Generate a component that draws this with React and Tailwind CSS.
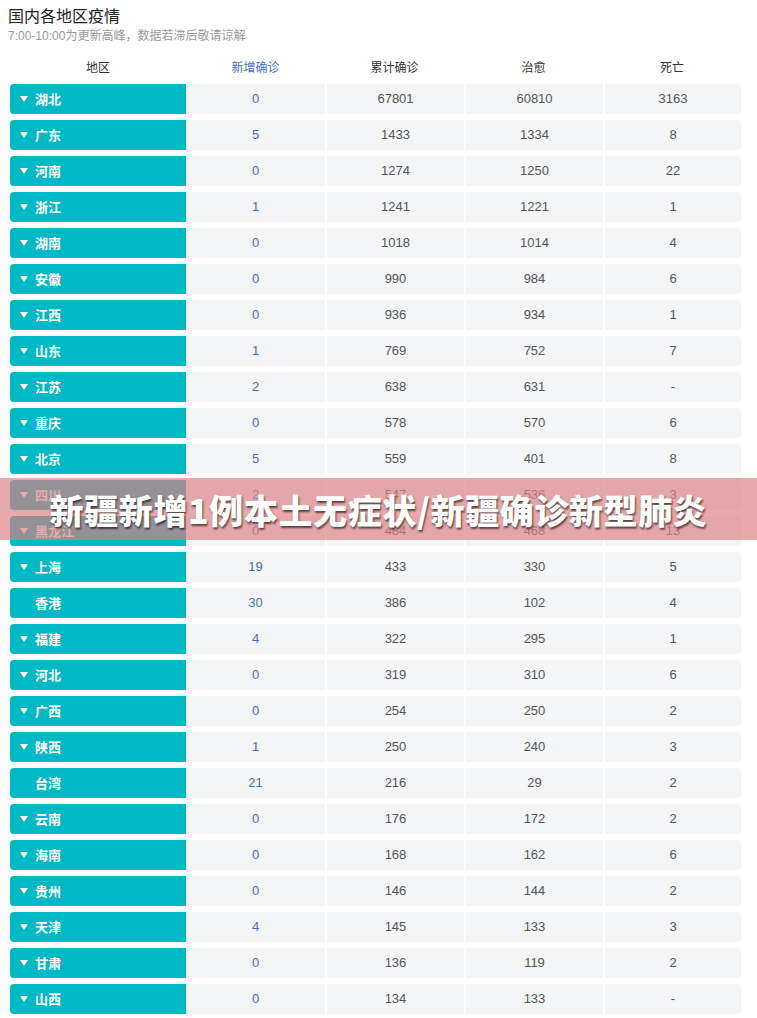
import React from 'react';

const rows = [
  ['湖北', '0', '67801', '60810', '3163', true],
  ['广东', '5', '1433', '1334', '8', true],
  ['河南', '0', '1274', '1250', '22', true],
  ['浙江', '1', '1241', '1221', '1', true],
  ['湖南', '0', '1018', '1014', '4', true],
  ['安徽', '0', '990', '984', '6', true],
  ['江西', '0', '936', '934', '1', true],
  ['山东', '1', '769', '752', '7', true],
  ['江苏', '2', '638', '631', '-', true],
  ['重庆', '0', '578', '570', '6', true],
  ['北京', '5', '559', '401', '8', true],
  ['四川', '2', '547', '536', '3', true],
  ['黑龙江', '0', '484', '468', '13', true],
  ['上海', '19', '433', '330', '5', true],
  ['香港', '30', '386', '102', '4', false],
  ['福建', '4', '322', '295', '1', true],
  ['河北', '0', '319', '310', '6', true],
  ['广西', '0', '254', '250', '2', true],
  ['陕西', '1', '250', '240', '3', true],
  ['台湾', '21', '216', '29', '2', false],
  ['云南', '0', '176', '172', '2', true],
  ['海南', '0', '168', '162', '6', true],
  ['贵州', '0', '146', '144', '2', true],
  ['天津', '4', '145', '133', '3', true],
  ['甘肃', '0', '136', '119', '2', true],
  ['山西', '0', '134', '133', '-', true],
];

const font = "font-['Liberation_Sans','Noto_Sans_CJK_SC',sans-serif]";

const Row = ({ name, add, total, cured, dead, arrow }) => (
  <div className="flex h-[30px] ml-[10px] mb-[6px] text-[13px] leading-[30px]">
    <div className="w-[176px] flex items-center rounded-l-[4px] bg-[#00b9c5] text-white font-bold">
      <span className="w-[25px] flex justify-center pl-[2px]">
        {arrow && (
          <svg width="8" height="6" viewBox="0 0 8 6">
            <path d="M0 0 H8 L4 6 Z" fill="#fff" />
          </svg>
        )}
      </span>
      <span className="font-['Noto_Sans_CJK_SC',sans-serif]">{name}</span>
    </div>
    <div className="w-[139px] bg-[#f4f5f7] text-center text-[#4a6db5]">{add}</div>
    <div className="w-[137px] ml-[2px] bg-[#f4f5f7] text-center text-[#555]">{total}</div>
    <div className="w-[137px] ml-[2px] bg-[#f4f5f7] text-center text-[#555]">{cured}</div>
    <div className="w-[136px] ml-[2px] bg-[#f4f5f7] text-center text-[#555] rounded-r-[4px]">{dead}</div>
  </div>
);

export default function App() {
  return (
    <div className={`relative w-[757px] h-[1018px] overflow-hidden bg-white ${font}`}>
      {/* title */}
      <div className="pl-[8px] pt-[7px]">
        <div className="text-[16px] leading-[20px] text-[#222]">国内各地区疫情</div>
        <div className="text-[12px] leading-[16px] text-[#999] mt-[1px]">7:00-10:00为更新高峰，数据若滞后敬请谅解</div>
      </div>

      {/* header */}
      <div className="flex ml-[10px] h-[40px] items-end pb-[8px] text-[12px] leading-[16px] text-[#333]">
        <div className="w-[176px] text-center">地区</div>
        <div className="w-[139px] text-center text-[#3e6fc9]">新增确诊</div>
        <div className="w-[139px] text-center">累计确诊</div>
        <div className="w-[139px] text-center">治愈</div>
        <div className="w-[138px] text-center">死亡</div>
      </div>

      {rows.map(([name, add, total, cured, dead, arrow]) => (
        <Row key={name} name={name} add={add} total={total} cured={cured} dead={dead} arrow={arrow} />
      ))}

      {/* banner over the list */}
      <div className="absolute left-0 top-[478px] w-full h-[62px] flex items-center justify-center bg-[rgba(220,128,129,0.68)]">
        <span className="font-['Noto_Sans_CJK_SC',sans-serif] font-black text-[34px] text-white tracking-[0.6px] [text-shadow:1px_2px_2px_rgba(0,0,0,0.6)]">
          新疆新增1例本土无症状/新疆确诊新型肺炎
        </span>
      </div>
    </div>
  );
}
